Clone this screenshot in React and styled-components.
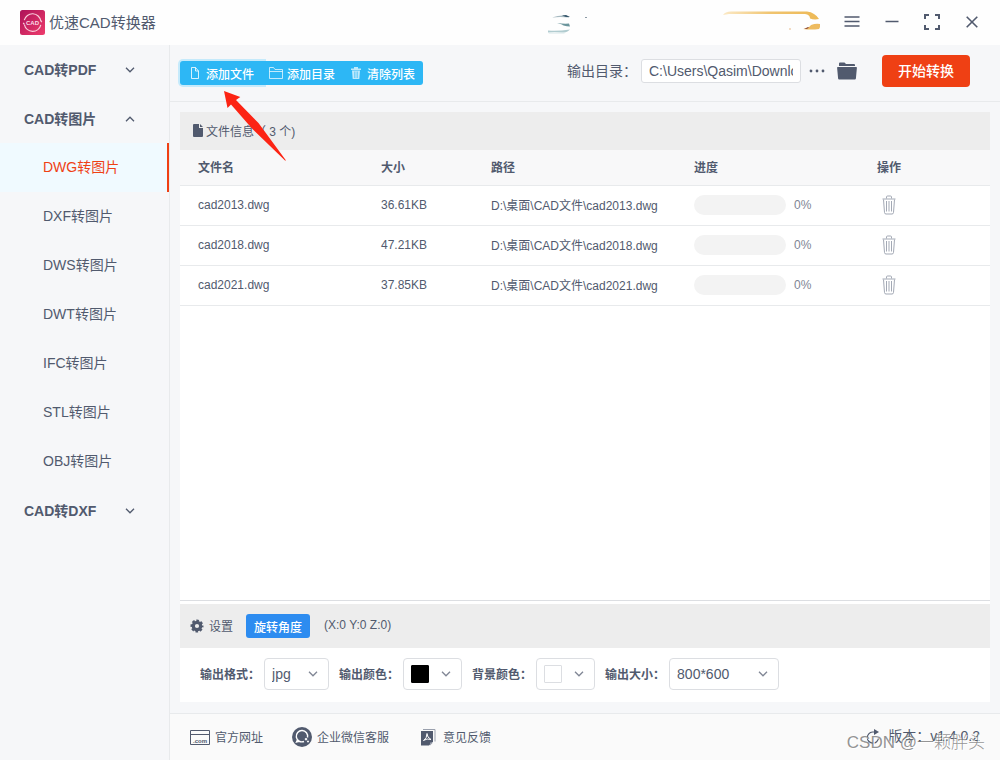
import { useState } from 'react';
import styled, { createGlobalStyle } from 'styled-components';

const GlobalStyle = createGlobalStyle`
  * {
    box-sizing: border-box;
  }
  body {
    margin: 0;
    background: #f6f7f9;
    color: #515a6e;
    font-family: 'Liberation Sans', 'Noto Sans CJK SC', sans-serif;
    font-size: 12px;
  }
  button,
  input,
  select {
    font-family: inherit;
    color: inherit;
  }
  button {
    border: 0;
    background: none;
    padding: 0;
    cursor: pointer;
  }
`;

const menus = [
  { title: 'CAD转PDF', items: [] },
  {
    title: 'CAD转图片',
    open: true,
    items: [
      'DWG转图片',
      'DXF转图片',
      'DWS转图片',
      'DWT转图片',
      'IFC转图片',
      'STL转图片',
      'OBJ转图片',
    ],
  },
  { title: 'CAD转DXF', items: [] },
];

const files = [
  { name: 'cad2013.dwg', size: '36.61KB', progress: 0 },
  { name: 'cad2018.dwg', size: '47.21KB', progress: 0 },
  { name: 'cad2021.dwg', size: '37.85KB', progress: 0 },
];

//icons
const Chevron = ({ up }) => (
  <svg width='10' height='6' viewBox='0 0 10 6' fill='none' stroke='currentColor' strokeWidth='1.3'>
    <path d={up ? 'M1 5.2 5 1.2 9 5.2' : 'M1 .8 5 4.8 9 .8'} />
  </svg>
);

const Logo = () => (
  <svg width='25' height='25' viewBox='0 0 25 25'>
    <defs>
      <linearGradient id='logoBg' x1='0' y1='0' x2='1' y2='1'>
        <stop offset='0' stopColor='#ad1259' />
        <stop offset='1' stopColor='#ee3c6c' />
      </linearGradient>
    </defs>
    <rect width='25' height='25' rx='2.5' fill='url(#logoBg)' />
    <g fill='none' stroke='#f9cfdc' strokeWidth='1.2'>
      <path d='M4.3 10.2A8.4 8.4 0 0 1 20.8 11M20.8 14.8A8.4 8.4 0 0 1 4.4 14.6' />
      <path d='m3.2 12.8 1.2 1.6M21.8 12.2l-1.1-1.6' />
    </g>
    <text x='12.5' y='15' textAnchor='middle' fontSize='6' fontWeight='700' fill='#fbdde6'>
      CAD
    </text>
  </svg>
);

const Banner = () => (
  <svg width='280' height='30' viewBox='0 0 280 30'>
    <defs>
      <linearGradient id='gold' x1='0' x2='1'>
        <stop offset='0' stopColor='#fbe9c6' />
        <stop offset='.5' stopColor='#f0c46f' />
        <stop offset='1' stopColor='#edb956' />
      </linearGradient>
    </defs>
    <path d='M183 7q2-3.500 8-3.500h76q8 1 12 7.500-5 1-9-.5 0-4-5-4.500h-76z' fill='url(#gold)' />
    <path d='M271 17q5-2 9-1 1 2-1 5-8 1-16 0 6-1 8-4z' fill='#eebb5f' />
    <path d='m264 21 4-2 1 .5-2 1.500z' fill='#93523e' />
    <path d='M249 20.500h2v1h-2z' fill='#e8b98a' />
    <path d='M12 9.500q7-2.500 13-2 5 1 4 2-9-1-17 0z' fill='#a6b9c0' />
    <path d='m22 7.500 4-.5 4 2h-4z' fill='#36566b' />
    <path d='M17 15q7 1 12 .5l1 3q-7-.5-8-2z' fill='#6b959c' />
    <path d='M8 22.500q9 1 22-1-3 3.500-8 3-8-1-14 0z' fill='#b1ccd0' />
    <path d='M8 24.500h18l-2 1H9z' fill='#d5e5e7' />
    <path d='M45 9h2v1h-2z' fill='#8c9aa5' />
  </svg>
);

const MenuIcon = () => (
  <svg width='16' height='12' viewBox='0 0 16 12' stroke='currentColor' strokeWidth='1.600'>
    <path d='M.5 1h15M.5 5.500h15M.5 10h15' />
  </svg>
);

const MinusIcon = () => (
  <svg width='14' height='12' viewBox='0 0 14 12' stroke='currentColor' strokeWidth='1.500'>
    <path d='M.5 5.500h13' />
  </svg>
);

const FullIcon = () => (
  <svg width='16' height='16' viewBox='0 0 16 16' fill='none' stroke='currentColor' strokeWidth='2'>
    <path d='M1 5V1h4M11 1h4v4M15 11v4h-4M5 15H1v-4' />
  </svg>
);

const CloseIcon = () => (
  <svg width='12' height='12' viewBox='0 0 12 12' stroke='currentColor' strokeWidth='1.600'>
    <path d='m.7.7 10.600 10.600M11.300.7.7 11.300' />
  </svg>
);

const NewFileIcon = () => (
  <svg width='8' height='12' viewBox='0 0 8 12' fill='none' stroke='#fff' strokeOpacity='.8'>
    <path d='M.5.5h4L7.500 4v7.500h-7zM4.500.5V4h3' />
  </svg>
);

const NewFolderIcon = () => (
  <svg width='14' height='12' viewBox='0 0 14 12' fill='none' stroke='#fff' strokeOpacity='.7'>
    <path d='M.5 11.500V.5h4l1.500 2h7.500v9zM.5 4.500h13' />
  </svg>
);

const ClearIcon = () => (
  <svg width='10' height='12' viewBox='0 0 10 12' fill='#fff' fillOpacity='.7'>
    <path d='M3 0h4v1.500h3V3H0V1.500h3zM1 3.500h8l-.7 8.500H1.700z' />
    <path d='M3.500 4.500v6.500M5 4.500v6.500M6.500 4.500v6.500' stroke='#2db7f5' strokeWidth='.5' />
  </svg>
);

const FolderIcon = () => (
  <svg width='20' height='18' viewBox='0 0 20 18' fill='currentColor'>
    <path d='M2 4V1.500q0-1 1-1h4.500l1.500 1.500h8q1 0 1 1v1z' />
    <path d='M.8 5h18.400q.8 0 .7.8l-1 10.700q-.1 1-1 1H2.100q-.9 0-1-1L.1 5.800Q0 5 .8 5z' />
  </svg>
);

const DocIcon = () => (
  <svg width='10' height='13' viewBox='0 0 10 13' fill='currentColor'>
    <path d='M1 0h5v4h4v8q0 1-1 1H1q-1 0-1-1V1q0-1 1-1zM7 0l3 3H7z' />
  </svg>
);

const TrashIcon = () => (
  <svg width='14' height='20' viewBox='0 0 14 20' fill='none' stroke='#a3a9b5'>
    <path d='M.5 4h13M4.500 3.500V2q0-1 1-1h3q1 0 1 1v1.500M1.500 4.500l1 13q.1 1.500 1.500 1.500h6q1.400 0 1.500-1.500l1-13' />
    <path d='M4.500 6v10.500M7 6v10.500M9.500 6v10.500' />
  </svg>
);

const GearIcon = () => (
  <svg width='14' height='14' viewBox='0 0 14 14'>
    <circle cx='7' cy='7' r='3.700' fill='none' stroke='currentColor' strokeWidth='3.200' />
    <circle cx='7' cy='7' r='5.500' fill='none' stroke='currentColor' strokeWidth='2' strokeDasharray='2.600 1.720' strokeDashoffset='1.300' />
  </svg>
);

const SiteIcon = () => (
  <svg width='20' height='15' viewBox='0 0 20 15' fill='none' stroke='currentColor'>
    <path d='M.5.5h19v14H.5zM.5 4.500h19' />
    <text x='10' y='12.500' textAnchor='middle' fontSize='6' fontWeight='700' fill='currentColor' stroke='none'>
      .com
    </text>
  </svg>
);

const ServiceIcon = () => (
  <svg width='20' height='20' viewBox='0 0 20 20' fill='none'>
    <circle cx='10' cy='10' r='10' fill='currentColor' />
    <path d='M12 14.500A5.700 5.700 0 1 1 15.500 10.500M5.500 12.800l-1 2.200 2.700-.6' stroke='#fff' strokeWidth='1.400' />
    <path d='m12.500 12 1.500-1.300 1.500 1.300-1.500 1.700zM14.800 14.500l1.200-1.200 1.200 1.200-1.200 1.200z' fill='#fff' />
  </svg>
);

const FeedbackIcon = () => (
  <svg width='20' height='17' viewBox='-2 0 20 17'>
    <path d='M3 .5h12v12' fill='none' stroke='#9aa0ad' />
    <path d='M1 2h12v10.500l-4 4H1z' fill='currentColor' />
    <path d='M10 16.500v-3h3z' fill='#9aa0ad' />
    <path d='M3.500 11.500Q7 9.500 7 4.500q0 4 4 6-4-1.500-7.500 1z' fill='none' stroke='#fff' />
  </svg>
);

const RefreshIcon = () => (
  <svg width='16' height='16' viewBox='0 0 16 16' fill='none' stroke='currentColor' strokeWidth='1.200'>
    <path d='M10 3H7.500a5.600 5.600 0 1 0 6 6' />
    <path d='M9 0v6l5-3z' fill='currentColor' stroke='none' />
  </svg>
);

const App = () => {
  const [active, setActive] = useState('DWG转图片');
  const [format, setFormat] = useState('jpg');
  const [size, setSize] = useState('800*600');

  return (
    <Page>
      <GlobalStyle />
      <Header>
        <Logo />
        <Title>优速CAD转换器</Title>
        <Banner />
        <WindowButtons>
          <button aria-label='菜单'><MenuIcon /></button>
          <button aria-label='最小化'><MinusIcon /></button>
          <button aria-label='最大化'><FullIcon /></button>
          <button aria-label='关闭'><CloseIcon /></button>
        </WindowButtons>
      </Header>
      <Body>
        <Sidebar>
          {menus.map((menu) => (
            <div key={menu.title}>
              <MenuTitle>
                {menu.title}
                <Chevron up={menu.open} />
              </MenuTitle>
              {menu.items.map((item) => (
                <MenuItem key={item} $active={item === active} onClick={() => setActive(item)}>
                  {item}
                </MenuItem>
              ))}
            </div>
          ))}
        </Sidebar>
        <Main>
          <Toolbar>
            <ButtonGroup>
              <ToolButton $focused><NewFileIcon />添加文件</ToolButton>
              <ToolButton><NewFolderIcon />添加目录</ToolButton>
              <ToolButton><ClearIcon />清除列表</ToolButton>
              <Arrow width='64' height='72' viewBox='0 0 64 72'>
                <path d='M0 0 16.300 6 12 9 34.500 32 62 69.500 61 69.500 28 37.500 7 13.500 3.500 17z' fill='#fc2414' />
              </Arrow>
            </ButtonGroup>
            <OutputDir>
              <label htmlFor='outputDir'>输出目录：</label>
              <input id='outputDir' defaultValue='C:\Users\Qasim\Downloads' />
              <IconButton aria-label='浏览'>
                <svg width='16' height='4' viewBox='0 0 16 4' fill='currentColor'>
                  <circle cx='2' cy='2' r='1.400' />
                  <circle cx='8' cy='2' r='1.400' />
                  <circle cx='14' cy='2' r='1.400' />
                </svg>
              </IconButton>
              <IconButton aria-label='打开目录'><FolderIcon /></IconButton>
            </OutputDir>
            <StartButton>开始转换</StartButton>
          </Toolbar>
          <FilePanel>
            <PanelTitle><DocIcon />文件信息（ 3 个)</PanelTitle>
            <FileTable>
              <colgroup>
                <col width='183' />
                <col width='110' />
                <col width='203' />
                <col width='183' />
                <col />
              </colgroup>
              <thead>
                <tr>
                  <th>文件名</th>
                  <th>大小</th>
                  <th>路径</th>
                  <th>进度</th>
                  <th>操作</th>
                </tr>
              </thead>
              <tbody>
                {files.map((file) => (
                  <tr key={file.name}>
                    <td>{file.name}</td>
                    <td>{file.size}</td>
                    <td>D:\桌面\CAD文件\{file.name}</td>
                    <td>
                      <Progress>
                        <ProgressBar><div style={{ width: `${file.progress}%` }} /></ProgressBar>
                        {file.progress}%
                      </Progress>
                    </td>
                    <td>
                      <DeleteButton aria-label='删除'><TrashIcon /></DeleteButton>
                    </td>
                  </tr>
                ))}
              </tbody>
            </FileTable>
          </FilePanel>
          <Settings>
            <SettingsBar>
              <GearIcon />
              <span>设置</span>
              <RotateButton>旋转角度</RotateButton>
              <span>(X:0 Y:0 Z:0)</span>
            </SettingsBar>
            <Options>
              <Field>
                <label htmlFor='format'>输出格式：</label>
                <SelectBox $width='65px'>
                  <select id='format' value={format} onChange={(e) => setFormat(e.target.value)}>
                    <option>jpg</option>
                    <option>png</option>
                    <option>bmp</option>
                  </select>
                  <Chevron />
                </SelectBox>
              </Field>
              <Field>
                <label htmlFor='outColor'>输出颜色：</label>
                <ColorButton id='outColor'><Swatch $color='#000' /><Chevron /></ColorButton>
              </Field>
              <Field>
                <label htmlFor='bgColor'>背景颜色：</label>
                <ColorButton id='bgColor'><Swatch $color='#fff' /><Chevron /></ColorButton>
              </Field>
              <Field>
                <label htmlFor='size'>输出大小：</label>
                <SelectBox $width='110px'>
                  <select id='size' value={size} onChange={(e) => setSize(e.target.value)}>
                    <option>800*600</option>
                    <option>1024*768</option>
                    <option>1920*1080</option>
                  </select>
                  <Chevron />
                </SelectBox>
              </Field>
            </Options>
          </Settings>
          <Footer>
            <a href='#site'><SiteIcon /><span>官方网址</span></a>
            <a href='#service'><ServiceIcon /><span>企业微信客服</span></a>
            <a href='#feedback'><FeedbackIcon /><span>意见反馈</span></a>
            <Version><RefreshIcon /><span>版本：v1.4.0.2</span></Version>
            <Watermark>CSDN @一颗胖头</Watermark>
          </Footer>
        </Main>
      </Body>
    </Page>
  );
};

//style
const Page = styled.div`
  display: flex;
  flex-direction: column;
  min-height: 100vh;
`;

const Header = styled.header`
  display: flex;
  align-items: center;
  height: 45px;
  padding: 0 8px 0 20px;
  background: #fefefe;
  > svg {
    flex: none;
  }
`;

const Title = styled.h1`
  flex: 1;
  margin: 0 0 0 4px;
  padding-bottom: 2px;
  font-size: 15px;
  font-weight: 400;
`;

const WindowButtons = styled.div`
  display: flex;
  margin-left: 12px;
  padding-bottom: 2px;
  button {
    display: flex;
    align-items: center;
    justify-content: center;
    width: 40px;
    height: 40px;
  }
`;

const Body = styled.div`
  display: flex;
  flex: 1;
`;

const Sidebar = styled.nav`
  flex: none;
  width: 170px;
  border-right: 1px solid #e8eaec;
`;

const MenuTitle = styled.button`
  display: flex;
  align-items: center;
  justify-content: space-between;
  width: 100%;
  height: 49px;
  padding: 0 34px 2px 24px;
  font-size: 14px;
  font-weight: 700;
  svg {
    margin-top: 2px;
  }
`;

const MenuItem = styled.button`
  display: block;
  width: 100%;
  height: 49px;
  padding: 0 0 4px 43px;
  border-right: 2px solid ${(props) => (props.$active ? '#ef4014' : 'transparent')};
  background: ${(props) => (props.$active ? '#f0faff' : 'none')};
  color: ${(props) => (props.$active ? '#ef4014' : 'inherit')};
  font-size: 14px;
  text-align: left;
`;

const Main = styled.main`
  display: flex;
  flex: 1;
  flex-direction: column;
  min-width: 0;
`;

const Toolbar = styled.div`
  display: flex;
  align-items: center;
  height: 57px;
  padding: 0 30px 4px 10px;
  border-bottom: 1px solid #e8eaec;
`;

const ButtonGroup = styled.div`
  position: relative;
  display: flex;
  margin-top: 4px;
`;

const ToolButton = styled.button`
  display: flex;
  align-items: center;
  gap: 4px;
  height: 24px;
  padding: 0 8px 0 5px;
  background: #2db7f5;
  box-shadow: ${(props) => (props.$focused ? '0 0 0 2px #c5eafb' : 'none')};
  color: #fff;
  font-size: 12px;
  font-weight: 500;
  &:first-child {
    gap: 7px;
    padding: 0 10px 0 11px;
    border-radius: 3px 0 0 3px;
  }
  &:nth-child(3) {
    gap: 6px;
    padding-left: 8px;
    border-radius: 0 3px 3px 0;
  }
`;

const Arrow = styled.svg`
  position: absolute;
  top: 30px;
  left: 44px;
  pointer-events: none;
`;

const OutputDir = styled.div`
  display: flex;
  align-items: center;
  margin-left: auto;
  font-size: 14px;
  label {
    padding-bottom: 2px;
  }
  input {
    width: 160px;
    height: 24px;
    margin: 0 8px 0 4px;
    padding: 0 7px;
    border: 1px solid #dcdee2;
    border-radius: 3px;
    background: #fff;
    font-size: 14px;
  }
`;

const IconButton = styled.button`
  display: flex;
  margin-right: 12px;
`;

const StartButton = styled.button`
  width: 88px;
  height: 32px;
  margin-left: 13px;
  padding-bottom: 2px;
  border-radius: 4px;
  background: #ef4014;
  color: #fff;
  font-size: 14px;
  font-weight: 500;
`;

const FilePanel = styled.section`
  flex: 1;
  margin: 10px 10px 0;
  border-bottom: 1px solid #dcdee2;
  background: #fff;
`;

const PanelTitle = styled.h2`
  display: flex;
  align-items: center;
  gap: 3px;
  height: 38px;
  margin: 0;
  padding: 0 0 2px 13px;
  background: #ededed;
  font-size: 12px;
  font-weight: 400;
`;

const FileTable = styled.table`
  width: 100%;
  table-layout: fixed;
  border-collapse: separate;
  border-spacing: 0;
  th,
  td {
    height: 40px;
    padding: 0 0 2px 18px;
    border-bottom: 1px solid #e8eaec;
    text-align: left;
    white-space: nowrap;
  }
  th {
    height: 36px;
    background: #f8f8f9;
  }
`;

const Progress = styled.div`
  display: flex;
  align-items: center;
  gap: 8px;
  color: #808695;
`;

const ProgressBar = styled.div`
  width: 92px;
  height: 20px;
  border-radius: 10px;
  overflow: hidden;
  background: #f3f3f3;
  div {
    height: 100%;
    background: #2db7f5;
  }
`;

const DeleteButton = styled.button`
  display: flex;
  margin-left: 5px;
`;

const Settings = styled.section`
  margin: 0 10px;
  padding-top: 3px;
  background: #fff;
`;

const SettingsBar = styled.div`
  display: flex;
  align-items: center;
  height: 44px;
  padding-left: 10px;
  background: #ededed;
  svg {
    margin-right: 5px;
  }
  span {
    padding-bottom: 2px;
  }
`;

const RotateButton = styled.button`
  width: 64px;
  height: 24px;
  margin: 0 14px 0 13px;
  border-radius: 3px;
  background: #2d8cf0;
  color: #fff;
  font-size: 12px;
  font-weight: 500;
`;

const Options = styled.div`
  display: flex;
  flex-wrap: wrap;
  gap: 10px;
  padding: 10px 20px 12px;
`;

const Field = styled.div`
  display: flex;
  align-items: center;
  gap: 4px;
  font-weight: 700;
  label {
    padding-bottom: 2px;
  }
`;

const SelectBox = styled.div`
  position: relative;
  width: ${(props) => props.$width};
  select {
    width: 100%;
    height: 32px;
    padding: 0 24px 0 7px;
    border: 1px solid #dcdee2;
    border-radius: 4px;
    background: #fff;
    font-size: 14px;
    appearance: none;
  }
  svg {
    position: absolute;
    top: 13px;
    right: 11px;
    color: #808695;
    pointer-events: none;
  }
`;

const ColorButton = styled.button`
  display: flex;
  align-items: center;
  justify-content: space-between;
  width: 59px;
  height: 32px;
  padding: 0 10px 0 7px;
  border: 1px solid #dcdee2;
  border-radius: 4px;
  background: #fff;
  color: #808695;
`;

const Swatch = styled.span`
  width: 18px;
  height: 18px;
  border: 1px solid ${(props) => (props.$color === '#fff' ? '#dcdee2' : props.$color)};
  border-radius: 1px;
  background: ${(props) => props.$color};
`;

const Footer = styled.footer`
  position: relative;
  display: flex;
  align-items: center;
  gap: 29px;
  height: 47px;
  margin-top: 11px;
  padding: 0 20px;
  border-top: 1px solid #e8eaec;
  background: #fafafa;
  a {
    display: flex;
    align-items: center;
    gap: 5px;
    color: inherit;
    text-decoration: none;
  }
  a span {
    padding-bottom: 2px;
  }
`;

const Version = styled.span`
  display: flex;
  align-items: center;
  gap: 7px;
  margin-left: auto;
  font-size: 14px;
  span {
    padding-bottom: 4px;
  }
`;

const Watermark = styled.span`
  position: absolute;
  right: 15px;
  bottom: 7px;
  color: rgba(120, 120, 120, 0.8);
  font-size: 17px;
  font-weight: 300;
  text-shadow: 1px 1px 0 #fff;
`;

export default App;
